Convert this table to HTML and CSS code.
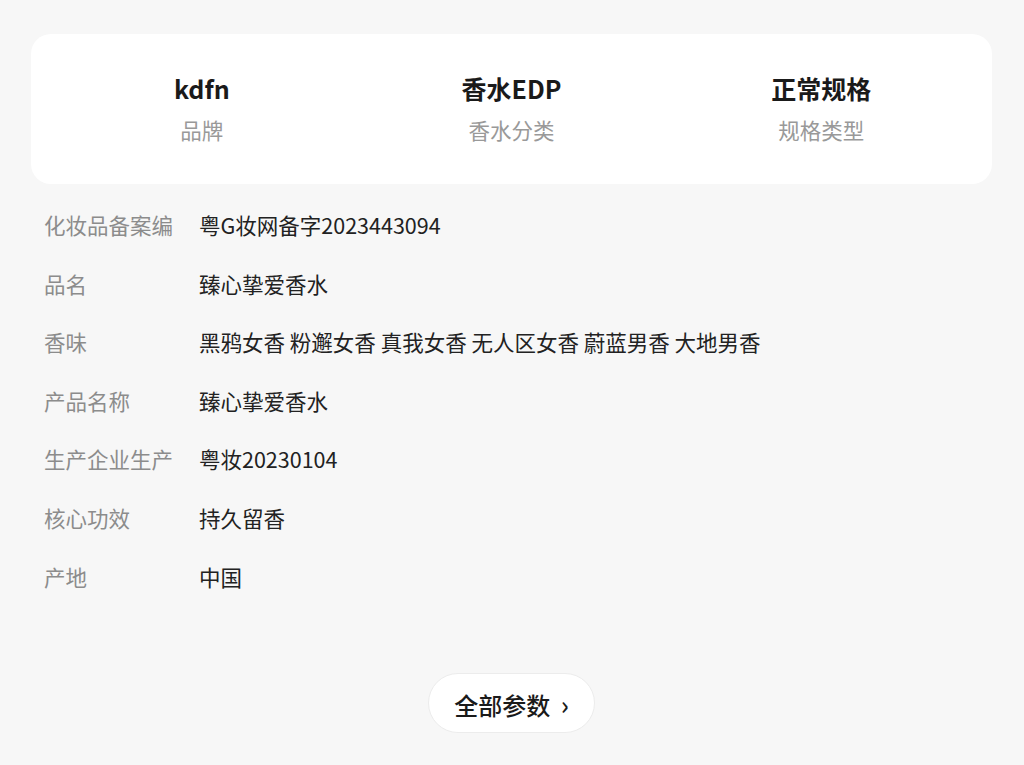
FILE: index.html
```html
<!DOCTYPE html>
<html lang="zh-CN">

<head>
  <meta charset="UTF-8">
  <meta name="viewport" content="width=device-width, initial-scale=1.0">
  <title>商品参数</title>
  <link rel="stylesheet" href="styles.css">
</head>

<body>
  <div class="page">
    <div class="summary">
      <div class="summary-item">
        <div class="summary-value">kdfn</div>
        <div class="summary-label">品牌</div>
      </div>
      <div class="summary-item">
        <div class="summary-value">香水EDP</div>
        <div class="summary-label">香水分类</div>
      </div>
      <div class="summary-item">
        <div class="summary-value">正常规格</div>
        <div class="summary-label">规格类型</div>
      </div>
    </div>

    <div class="params">
      <div class="param-row">
        <div class="param-name">化妆品备案编</div>
        <div class="param-value">粤G妆网备字2023443094</div>
      </div>
      <div class="param-row">
        <div class="param-name">品名</div>
        <div class="param-value">臻心挚爱香水</div>
      </div>
      <div class="param-row">
        <div class="param-name">香味</div>
        <div class="param-value">黑鸦女香 粉邂女香 真我女香 无人区女香 蔚蓝男香 大地男香</div>
      </div>
      <div class="param-row">
        <div class="param-name">产品名称</div>
        <div class="param-value">臻心挚爱香水</div>
      </div>
      <div class="param-row">
        <div class="param-name">生产企业生产</div>
        <div class="param-value">粤妆20230104</div>
      </div>
      <div class="param-row">
        <div class="param-name">核心功效</div>
        <div class="param-value">持久留香</div>
      </div>
      <div class="param-row">
        <div class="param-name">产地</div>
        <div class="param-value">中国</div>
      </div>
    </div>

    <div class="more">
      <button class="more-btn">全部参数 <span class="arrow">›</span></button>
    </div>
  </div>
</body>

</html>
```

FILE: styles.css
```css
body {
  margin: 0;
  padding: 0;
  background-color: #f7f7f7;
  font-family: "Noto Sans CJK SC", "Noto Sans", sans-serif;
  color: #222;
}

.page {
  padding: 34px 32px 0 31px;
}

.summary {
  display: grid;
  grid-template-columns: repeat(3, 1fr);
  background-color: #fff;
  border-radius: 20px;
  padding: 38px 16px 0;
  height: 112px;
}

.summary-item {
  text-align: center;
}

.summary-value {
  font-size: 25px;
  font-weight: bold;
  color: #1a1a1a;
  line-height: 32px;
}

.summary-label {
  margin-top: 11px;
  font-size: 21.5px;
  color: #999;
  line-height: 30px;
}

.params {
  margin-top: 12px;
  padding-left: 13px;
}

.param-row {
  display: flex;
  padding: 14px 0;
  line-height: 30.6px;
  font-size: 21.5px;
}

.param-name {
  width: 155px;
  flex-shrink: 0;
  color: #8c8c8c;
}

.param-value {
  color: #222;
}

.more {
  display: flex;
  justify-content: center;
  margin-top: 67px;
}

.more-btn {
  height: 60px;
  padding: 0 25px 0 25px;
  border: 1px solid #ececec;
  border-radius: 30px;
  background-color: #fff;
  font-family: inherit;
  font-size: 24px;
  font-weight: 500;
  color: #1a1a1a;
  cursor: pointer;
}

.arrow {
  font-size: 26px;
  margin-left: 5px;
}
```
